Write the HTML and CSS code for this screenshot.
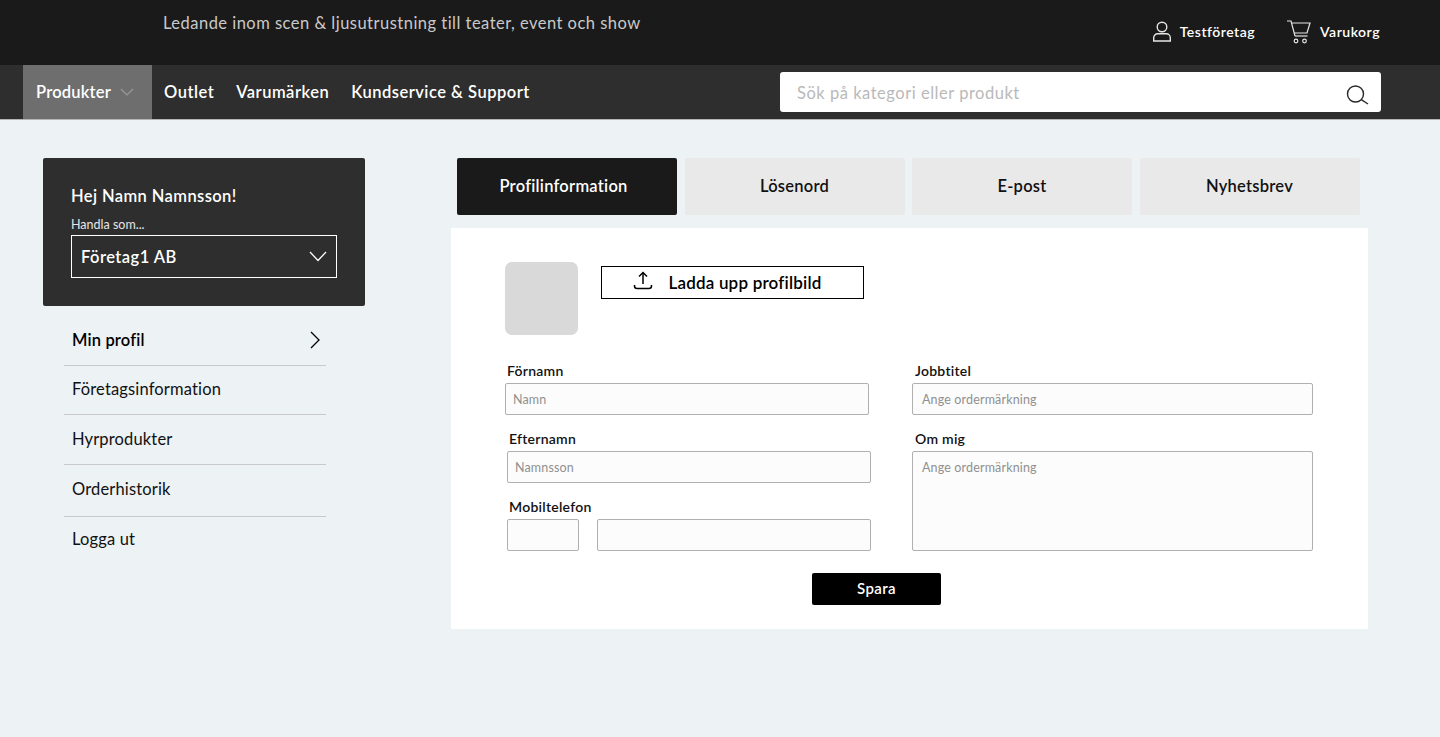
FILE: index.html
```html
<!DOCTYPE html>
<html lang="sv">
<head>
    <meta charset="UTF-8">
    <meta name="viewport" content="width=device-width, initial-scale=1.0">
    <title>Min profil</title>
    <link rel="stylesheet" href="styles.css">
</head>
<body>
    <header class="top-bar">
        <div class="tagline">Ledande inom scen &amp; ljusutrustning till teater, event och show</div>
        <div class="top-actions">
            <a class="top-link">
                <svg width="20" height="22" viewBox="0 0 20 22" fill="none" stroke="#e6e6e6" stroke-width="1.4"><circle cx="10" cy="7" r="4.8"/><path d="M1.700 21v-3.200c0-2.200 1.800-4 4-4h8.600c2.200 0 4 1.800 4 4V21z"/></svg>
                Testföretag
            </a>
            <a class="top-link">
                <svg width="26" height="26" viewBox="0 0 26 26" fill="none" stroke="#e6e6e6" stroke-width="1.2"><path d="M1 3h4l4 15"/><path d="M5.500 5H24l-3 10H8"/><path d="M9 18h12.500"/><circle cx="10" cy="23" r="1.800"/><circle cx="18.500" cy="23" r="1.800"/></svg>
                Varukorg
            </a>
        </div>
    </header>

    <nav class="main-nav">
        <ul class="nav-list">
            <li class="nav-item active">Produkter
                <svg width="14" height="8" viewBox="0 0 14 8" fill="none" stroke="#999" stroke-width="1.200"><path d="M1 1l6 6 6-6"/></svg>
            </li>
            <li class="nav-item">Outlet</li>
            <li class="nav-item">Varumärken</li>
            <li class="nav-item">Kundservice &amp; Support</li>
        </ul>
        <div class="search">
            <span class="search-text">Sök på kategori eller produkt</span>
            <svg width="24" height="24" viewBox="0 0 24 24" fill="none" stroke="#2a2a2a" stroke-width="1.400"><circle cx="9.500" cy="13" r="8"/><path d="M15.300 18.700l6.700 4.300"/></svg>
        </div>
    </nav>

    <main class="page">
        <aside class="sidebar">
            <div class="account-card">
                <div class="hello">Hej Namn Namnsson!</div>
                <div class="shop-as">Handla som...</div>
                <div class="company-select">
                    <span>Företag1 AB</span>
                    <svg width="18" height="11" viewBox="0 0 18 11" fill="none" stroke="#fff" stroke-width="1.300"><path d="M1 1l8 8.500L17 1"/></svg>
                </div>
            </div>
            <ul class="side-menu">
                <li class="side-item current">Min profil
                    <svg width="12" height="18" viewBox="0 0 12 18" fill="none" stroke="#000" stroke-width="1.300"><path d="M2 1l8 8-8 8"/></svg>
                </li>
                <li class="side-item">Företagsinformation</li>
                <li class="side-item">Hyrprodukter</li>
                <li class="side-item tall">Orderhistorik</li>
                <li class="side-item last">Logga ut</li>
            </ul>
        </aside>

        <section class="content">
            <div class="tabs">
                <div class="tab selected">Profilinformation</div>
                <div class="tab">Lösenord</div>
                <div class="tab">E-post</div>
                <div class="tab">Nyhetsbrev</div>
            </div>

            <div class="panel">
                <div class="picture-row">
                    <div class="avatar"></div>
                    <div class="upload-btn">
                        <svg width="20" height="20" viewBox="0 0 20 20" fill="none" stroke="#000" stroke-width="1.500"><path d="M10 13V2"/><path d="M6 5.500L10 1.500l4 4"/><path d="M1.500 14v1c0 1.500 1 2.500 2.500 2.500h12c1.500 0 2.500-1 2.500-2.500v-1"/></svg>
                        Ladda upp profilbild
                    </div>
                </div>

                <form class="profile-form" action="" method="post">
                    <div class="form-col left-col">
                        <div class="field first">
                            <label>Förnamn</label>
                            <div class="input"><span>Namn</span></div>
                        </div>
                        <div class="field">
                            <label>Efternamn</label>
                            <div class="input"><span>Namnsson</span></div>
                        </div>
                        <div class="field">
                            <label>Mobiltelefon</label>
                            <div class="phone-row">
                                <div class="input prefix"></div>
                                <div class="input number"></div>
                            </div>
                        </div>
                    </div>
                    <div class="form-col right-col">
                        <div class="field">
                            <label>Jobbtitel</label>
                            <div class="input"><span>Ange ordermärkning</span></div>
                        </div>
                        <div class="field">
                            <label>Om mig</label>
                            <div class="input textarea"><span>Ange ordermärkning</span></div>
                        </div>
                    </div>
                </form>

                <div class="save-row">
                    <div class="save-btn">Spara</div>
                </div>
            </div>
        </section>
    </main>
</body>
</html>
```

FILE: styles.css
```css
*{
    box-sizing: border-box;
}
body{
    margin: 0;
    min-height: 737px;
    background-color: #edf2f5;
    font-family: "Lato", "Liberation Sans", sans-serif;
    color: #000;
}
ul{
    list-style: none;
    margin: 0;
    padding: 0;
}

/* top */
.top-bar{
    height: 65px;
    background-color: #1a1a1a;
    display: flex;
    justify-content: space-between;
    padding: 13px 60px 0 163px;
}
.tagline{
    color: #c9c9c9;
    font-size: 16.500px;
    letter-spacing: 0.48px;
    line-height: 20px;
}
.top-actions{
    display: flex;
    gap: 31px;
    padding-top: 5px;
}
.top-link{
    display: flex;
    align-items: center;
    gap: 8px;
    color: #fff;
    font-size: 14px;
    font-weight: 600;
    letter-spacing: 0.5px;
    height: 26px;
}

/* nav */
.main-nav{
    height: 55px;
    background-color: #2e2e2e;
    border-bottom: 1px solid #b5b5b5;
    display: flex;
    justify-content: space-between;
    padding: 0 59px 0 23px;
}
.nav-list{
    display: flex;
    gap: 22px;
}
.nav-item{
    color: #fff;
    font-size: 16.500px;
    font-weight: 600;
    letter-spacing: 0.5px;
    display: flex;
    align-items: center;
    height: 54px;
}
.nav-item.active{
    background-color: #6e6e6e;
    width: 129px;
    padding-left: 13px;
    gap: 9px;
    margin-right: -10px;
    letter-spacing: 0.2px;
}
.search{
    width: 601px;
    height: 40px;
    margin-top: 7px;
    background-color: #fff;
    border-radius: 3px;
    display: flex;
    align-items: center;
    justify-content: space-between;
    padding: 2px 11px 0 17px;
}
.search-text{
    color: #b9b9b9;
    font-size: 16.500px;
    letter-spacing: 0.52px;
}

/* page */
.page{
    display: flex;
    padding: 38px 0 0 43px;
}
.sidebar{
    width: 322px;
    margin-right: 86px;
}
.account-card{
    height: 148px;
    background-color: #2e2e2e;
    border-radius: 2px;
    padding: 27px 28px 0;
    color: #fff;
}
.hello{
    font-size: 16.500px;
    font-weight: 600;
    letter-spacing: 0.4px;
    line-height: 22px;
}
.shop-as{
    font-size: 12.500px;
    line-height: 14px;
    margin-top: 11px;
    color: #e6e6e6;
}
.company-select{
    width: 266px;
    height: 43px;
    margin-top: 3px;
    border: 1px solid #fff;
    display: flex;
    align-items: center;
    justify-content: space-between;
    padding: 0 9px;
    font-size: 16.500px;
    font-weight: 600;
    letter-spacing: 0.45px;
}
.side-menu{
    width: 262px;
    margin-left: 21px;
}
.side-item{
    height: 49px;
    padding: 0 5px 2px 8px;
    border-bottom: 1px solid #c9c9c9;
    display: flex;
    align-items: center;
    justify-content: space-between;
    font-size: 16.500px;
    letter-spacing: 0.15px;
    color: #111;
}
.side-item.current{
    height: 60px;
    padding-top: 8px;
    padding-bottom: 0;
    font-weight: 600;
    color: #000;
}
.side-item:nth-child(3){
    height: 50px;
}
.side-item.tall{
    height: 52px;
    padding-bottom: 4px;
}
.side-item.last{
    height: 46px;
    border-bottom: 0;
}

/* tabs */
.content{
    width: 917px;
}
.tabs{
    display: flex;
    gap: 7.500px;
    margin-left: 6px;
}
.tab{
    width: 220px;
    height: 57px;
    background-color: #e9e9e9;
    border-radius: 2px;
    padding-bottom: 2px;
    display: flex;
    align-items: center;
    justify-content: center;
    font-size: 16.500px;
    font-weight: 600;
    letter-spacing: 0.25px;
    color: #111;
}
.tab.selected{
    background-color: #1a1a1a;
    color: #fff;
    padding-right: 7px;
}
.panel{
    height: 401px;
    margin-top: 13px;
    background-color: #fff;
    padding: 34px 55px 0 54px;
}
.picture-row{
    display: flex;
}
.avatar{
    width: 73px;
    height: 73px;
    background-color: #d9d9d9;
    border-radius: 7px;
}
.upload-btn{
    width: 263px;
    height: 33px;
    margin: 4px 0 0 23px;
    border: 1px solid #000;
    padding-right: 10px;
    display: flex;
    align-items: center;
    justify-content: center;
    gap: 15px;
    font-size: 17px;
    font-weight: 600;
    letter-spacing: 0.2px;
}
.upload-btn svg{
    margin-top: -3px;
}

/* form */
.profile-form{
    display: flex;
    margin-top: 26px;
}
.form-col{
    display: flex;
    flex-direction: column;
    gap: 14px;
}
.left-col{
    width: 366px;
    margin-right: 41px;
    padding-left: 2px;
}
.right-col{
    width: 401px;
}
.field label{
    display: block;
    height: 22px;
    line-height: 20px;
    padding-left: 2px;
    font-size: 14px;
    font-weight: 600;
    letter-spacing: 0.25px;
    color: #111;
}
.right-col .field label{
    padding-left: 3px;
}
.field.first{
    margin-left: -2px;
    margin-right: 2px;
}
.input{
    height: 32px;
    background-color: #fcfcfc;
    border: 1px solid #b0b0b0;
    border-radius: 2px;
    padding: 0 7px;
    display: flex;
    align-items: center;
    font-size: 12.500px;
    letter-spacing: 0.15px;
    color: #909090;
}
.right-col .input{
    padding: 0 9px;
}
.right-col .input.textarea{
    height: 100px;
    align-items: flex-start;
    padding-top: 8px;
}
.input.textarea span{
    line-height: 15px;
}
.phone-row{
    display: flex;
    gap: 18px;
}
.input.prefix{
    width: 72px;
}
.input.number{
    flex: 1;
}
.save-row{
    display: flex;
    justify-content: center;
    margin-top: 22px;
    padding-right: 65px;
}
.save-btn{
    width: 129px;
    height: 32px;
    background-color: #000;
    border-radius: 2px;
    padding-bottom: 2px;
    color: #fff;
    font-size: 15px;
    font-weight: 600;
    letter-spacing: 0.4px;
    display: flex;
    align-items: center;
    justify-content: center;
}
```
